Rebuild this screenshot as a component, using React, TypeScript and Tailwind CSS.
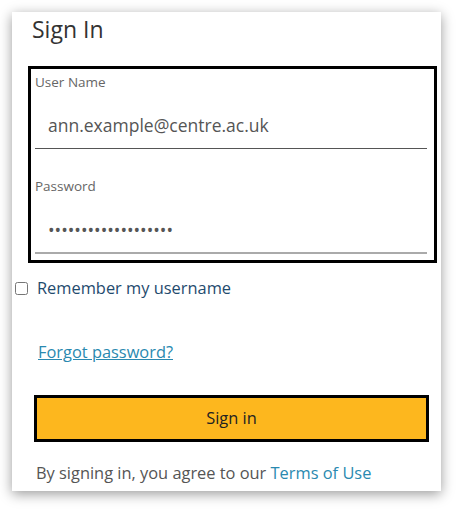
export default function App() {
  return (
    <div className="min-h-[510px] bg-white pt-3 pl-3 font-['Open_Sans',sans-serif]">
      <div className="w-[429px] h-[479px] overflow-hidden bg-white shadow-[0_3px_12px_rgba(0,0,0,0.4)]">
        <h1 className="pl-[20px] pt-[2px] text-[23px] leading-[30px] text-[#333]">Sign In</h1>

        <div className="ml-[16px] mt-[22px] w-[409px] border-[3px] border-black pl-[4px] pr-[7px] pb-[6px]">
          <label className="block mt-[4px] text-[13.5px] leading-[18px] text-[#666]">User Name</label>
          <div className="pl-[13px] pt-[22px] pb-[11px] text-[17.5px] leading-[24px] text-[#555] border-b border-[#555]">
            ann.example@centre.ac.uk
          </div>
          <label className="block mt-[28px] text-[13.5px] leading-[18px] text-[#666]">Password</label>
          <div className="pl-[13px] pt-[23px] pb-[10px] text-[17.5px] leading-[24px] text-[#555] border-b-2 border-[#aaa]">
            •••••••••••••••••••
          </div>
        </div>

        <div className="mt-[13px] flex items-center gap-[9px] pl-[3px]">
          <input type="checkbox" className="w-[13px] h-[13px]" />
          <span className="text-[16.4px] leading-[24px] text-[#1f4b6e]">Remember my username</span>
        </div>

        <div className="mt-[40px] pl-[26px]">
          <a href="#" className="text-[16.4px] leading-[24px] text-[#2a89b0] underline">Forgot password?</a>
        </div>

        <button className="mt-[31px] ml-[22px] w-[395px] h-[47px] border-[3px] border-black bg-[#fdb71e] text-[16.4px] text-[#222]">
          Sign in
        </button>

        <p className="mt-[19px] pl-[24px] text-[16.4px] leading-[24px] text-[#555]">
          By signing in, you agree to our <a href="#" className="text-[#2a89b0]">Terms of Use</a>
        </p>
      </div>
    </div>
  );
}
